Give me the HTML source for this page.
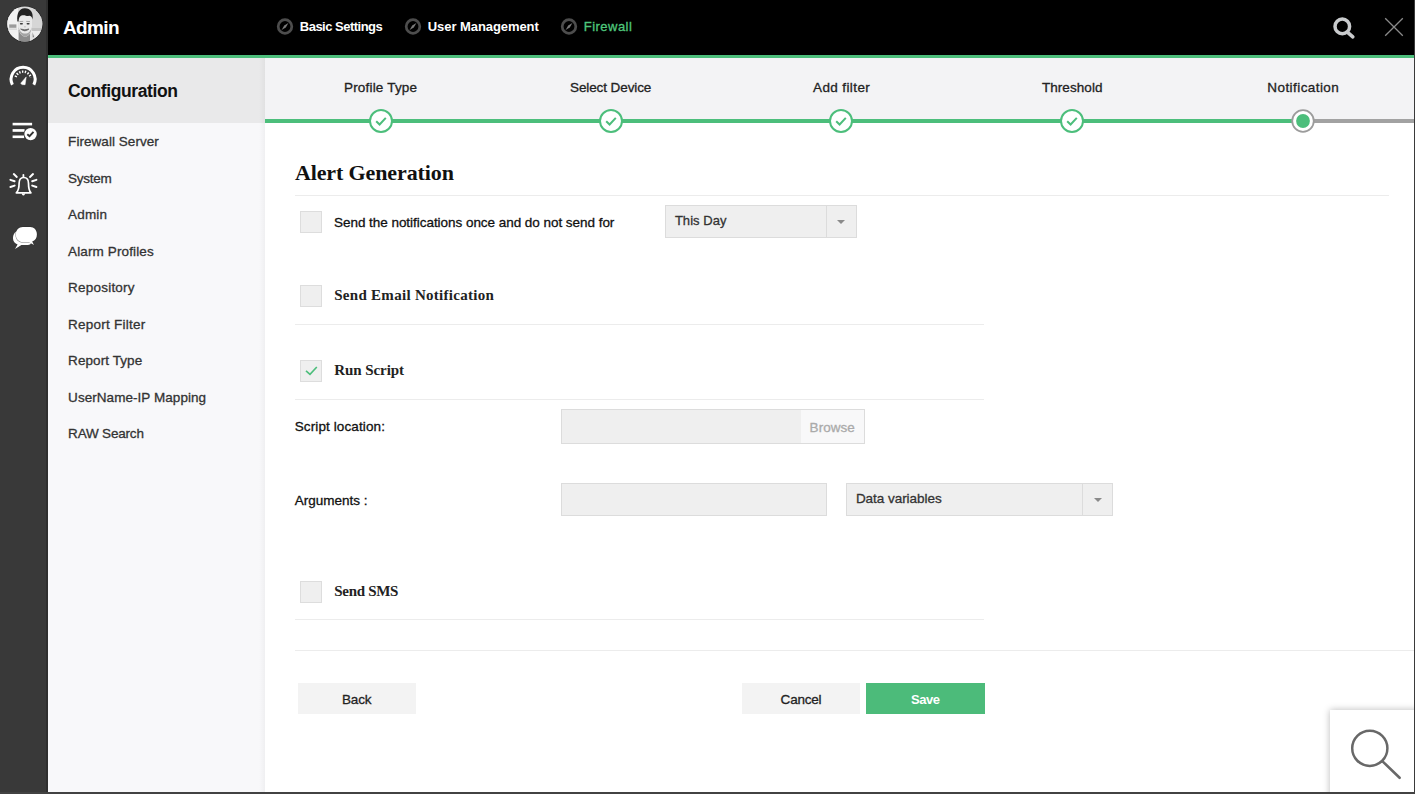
<!DOCTYPE html>
<html>
<head>
<meta charset="utf-8">
<title>Admin</title>
<style>
*{box-sizing:border-box;margin:0;padding:0}
html,body{width:1415px;height:794px;overflow:hidden;background:#fff}
body{font-family:"Liberation Sans",sans-serif;font-size:13px;color:#222;position:relative}
.abs{position:absolute}
#rail{left:0;top:0;width:48px;height:794px;background:#393939}
#topbar{left:48px;top:0;width:1367px;height:55px;background:#000}
#gline{left:48px;top:55px;width:1367px;height:3px;background:#4cbe7b}
#side{left:48px;top:58px;width:217px;height:736px;background:#f8f8fa}
#sidehead{left:48px;top:58px;width:217px;height:65px;background:#e9e9ea}
#sideshadow{left:259px;top:58px;width:6px;height:736px;background:linear-gradient(to right,rgba(0,0,0,0),rgba(0,0,0,0.035))}
#stepbg{left:265px;top:58px;width:1150px;height:61px;background:#f3f3f5}
#stepline{left:265px;top:119px;width:1037px;height:4px;background:#4cbe7b}
#stepline2{left:1302px;top:119px;width:113px;height:4px;background:#a2a2a2}
.t{position:absolute;white-space:nowrap;line-height:1}
.tk{-webkit-text-stroke:0.3px currentColor}
.sf{font-family:"Liberation Serif",serif}
.hr{position:absolute;height:1px;background:#ececec}
.cb{position:absolute;width:22px;height:22px;background:#efefef;border:1px solid #dddddd}
.inp{position:absolute;background:#efefef;border:1px solid #dcdcdc}
.btn{position:absolute;height:31px;background:#f3f3f3}
.step{position:absolute;top:109px;width:24px;height:24px}
.arrow{width:0;height:0;border-left:4px solid transparent;border-right:4px solid transparent;border-top:4px solid #8a8a8a}
#frameR{left:1413.6px;top:0;width:1.4px;height:794px;background:#3a3a3a}
#frameB{left:0;top:792px;width:1415px;height:2px;background:#424242}
</style>
</head>
<body>
<div id="rail" class="abs"></div>
<div id="topbar" class="abs"></div>
<div id="gline" class="abs"></div>
<div id="side" class="abs"></div>
<div id="sidehead" class="abs"></div>
<div id="sideshadow" class="abs"></div>
<div id="stepbg" class="abs"></div>
<div id="stepline" class="abs"></div>
<div id="stepline2" class="abs"></div>

<!-- rules -->
<div class="hr" style="left:295px;top:195px;width:1094px"></div>
<div class="hr" style="left:295px;top:324px;width:689px"></div>
<div class="hr" style="left:295px;top:399px;width:689px"></div>
<div class="hr" style="left:295px;top:619px;width:689px"></div>
<div class="hr" style="left:295px;top:650px;width:1120px"></div>

<!-- checkboxes -->
<div class="cb" style="left:300px;top:211px"></div>
<div class="cb" style="left:300px;top:285px"></div>
<div class="cb" style="left:300px;top:360px"></div>
<svg class="abs" style="left:300px;top:360px" width="22" height="22" viewBox="0 0 22 22"><path d="M6 10.8l4 3.6 6.8-7.4" fill="none" stroke="#4cbe7b" stroke-width="1.6"/></svg>
<div class="cb" style="left:300px;top:581px"></div>

<!-- buttons -->
<div class="btn" style="left:298px;top:683px;width:118px"></div>
<div class="btn" style="left:742px;top:683px;width:118px"></div>
<div class="btn" style="left:866px;top:683px;width:119px;background:#4cbb7a"></div>

<!-- selects / inputs -->
<div class="inp" style="left:665px;top:205px;width:192px;height:33px"></div>
<div class="abs" style="left:826px;top:206px;width:1px;height:31px;background:#dcdcdc"></div>
<div class="abs arrow" style="left:836.5px;top:220px"></div>

<div class="inp" style="left:561px;top:409px;width:304px;height:35px"></div>
<div class="abs" style="left:801px;top:410px;width:63px;height:33px;background:#f8f8f9"></div>

<div class="inp" style="left:561px;top:483px;width:266px;height:33px"></div>
<div class="inp" style="left:846px;top:483px;width:267px;height:33px"></div>
<div class="abs" style="left:1082px;top:484px;width:1px;height:31px;background:#dcdcdc"></div>
<div class="abs arrow" style="left:1093.8px;top:497.5px"></div>

<!-- step circles -->
<svg class="step" style="left:368.5px" viewBox="0 0 24 24"><circle cx="12" cy="12" r="11" fill="#fff" stroke="#4cbe7b" stroke-width="2"/><path d="M7.2 12.2l3.4 3.3 6.2-6.6" fill="none" stroke="#4cbe7b" stroke-width="2"/></svg>
<svg class="step" style="left:598.5px" viewBox="0 0 24 24"><circle cx="12" cy="12" r="11" fill="#fff" stroke="#4cbe7b" stroke-width="2"/><path d="M7.2 12.2l3.4 3.3 6.2-6.6" fill="none" stroke="#4cbe7b" stroke-width="2"/></svg>
<svg class="step" style="left:829.3px" viewBox="0 0 24 24"><circle cx="12" cy="12" r="11" fill="#fff" stroke="#4cbe7b" stroke-width="2"/><path d="M7.2 12.2l3.4 3.3 6.2-6.6" fill="none" stroke="#4cbe7b" stroke-width="2"/></svg>
<svg class="step" style="left:1060.3px" viewBox="0 0 24 24"><circle cx="12" cy="12" r="11" fill="#fff" stroke="#4cbe7b" stroke-width="2"/><path d="M7.2 12.2l3.4 3.3 6.2-6.6" fill="none" stroke="#4cbe7b" stroke-width="2"/></svg>
<svg class="step" style="left:1290.9px" viewBox="0 0 24 24"><circle cx="12" cy="12" r="10.8" fill="#fff" stroke="#9c9c9c" stroke-width="1.8"/><circle cx="12" cy="12" r="6.9" fill="#4cbe7b"/></svg>

<div class="t" style="left:63.0px;top:17.9px;font-size:19px;color:#fff;letter-spacing:-0.63px;font-weight:bold">Admin</div>
<div class="t" style="left:299.8px;top:20.2px;font-size:13px;color:#fff;letter-spacing:-0.51px;font-weight:bold">Basic Settings</div>
<div class="t" style="left:427.8px;top:20.2px;font-size:13px;color:#fff;letter-spacing:-0.07px;font-weight:bold">User Management</div>
<div class="t tk" style="left:583.8px;top:20.2px;font-size:13px;color:#4ec77c;letter-spacing:0.47px">Firewall</div>
<div class="t" style="left:68.0px;top:83.2px;font-size:17.5px;color:#111;letter-spacing:-0.39px;font-weight:bold">Configuration</div>
<div class="t tk" style="left:68.1px;top:135.1px;font-size:13.5px;color:#333;letter-spacing:0.05px">Firewall Server</div>
<div class="t tk" style="left:68.1px;top:171.6px;font-size:13.5px;color:#333;letter-spacing:-0.26px">System</div>
<div class="t tk" style="left:68.1px;top:208.1px;font-size:13.5px;color:#333;letter-spacing:0.16px">Admin</div>
<div class="t tk" style="left:68.1px;top:244.6px;font-size:13.5px;color:#333;letter-spacing:0.12px">Alarm Profiles</div>
<div class="t tk" style="left:68.1px;top:281.1px;font-size:13.5px;color:#333;letter-spacing:0.21px">Repository</div>
<div class="t tk" style="left:68.1px;top:317.6px;font-size:13.5px;color:#333;letter-spacing:0.23px">Report Filter</div>
<div class="t tk" style="left:68.1px;top:354.1px;font-size:13.5px;color:#333;letter-spacing:0.08px">Report Type</div>
<div class="t tk" style="left:68.1px;top:390.6px;font-size:13.5px;color:#333;letter-spacing:0.05px">UserName-IP Mapping</div>
<div class="t tk" style="left:68.1px;top:427.1px;font-size:13.5px;color:#333;letter-spacing:-0.19px">RAW Search</div>
<div class="t tk" style="left:344.0px;top:81.0px;font-size:13.5px;color:#222;letter-spacing:0.18px">Profile Type</div>
<div class="t tk" style="left:570.0px;top:81.0px;font-size:13.5px;color:#222;letter-spacing:-0.10px">Select Device</div>
<div class="t tk" style="left:813.0px;top:81.0px;font-size:13.5px;color:#222;letter-spacing:0.39px">Add filter</div>
<div class="t tk" style="left:1041.9px;top:81.0px;font-size:13.5px;color:#222;letter-spacing:0.07px">Threshold</div>
<div class="t tk" style="left:1267.3px;top:81.0px;font-size:13.5px;color:#222;letter-spacing:0.43px">Notification</div>
<div class="t sf" style="left:294.9px;top:161.6px;font-size:22px;color:#111;letter-spacing:-0.11px;font-weight:bold">Alert Generation</div>
<div class="t tk" style="left:334.0px;top:215.9px;font-size:13.5px;color:#111;letter-spacing:-0.04px">Send the notifications once and do not send for</div>
<div class="t tk" style="left:674.9px;top:214.0px;font-size:13px;color:#333;letter-spacing:0.04px">This Day</div>
<div class="t sf" style="left:334.2px;top:288.4px;font-size:15px;color:#222;letter-spacing:0.29px;font-weight:bold">Send Email Notification</div>
<div class="t sf" style="left:334.3px;top:362.7px;font-size:15px;color:#222;letter-spacing:-0.08px;font-weight:bold">Run Script</div>
<div class="t tk" style="left:294.7px;top:420.0px;font-size:13.5px;color:#111;letter-spacing:0.11px">Script location:</div>
<div class="t tk" style="left:809.6px;top:420.6px;font-size:13.5px;color:#aaaaaa;letter-spacing:0.04px">Browse</div>
<div class="t tk" style="left:294.7px;top:493.8px;font-size:13.5px;color:#111;letter-spacing:0.00px">Arguments :</div>
<div class="t tk" style="left:855.9px;top:491.9px;font-size:13.5px;color:#333;letter-spacing:-0.04px">Data variables</div>
<div class="t sf" style="left:334.3px;top:584.0px;font-size:15px;color:#222;letter-spacing:-0.31px;font-weight:bold">Send SMS</div>
<div class="t tk" style="left:342.0px;top:692.8px;font-size:13.5px;color:#222;letter-spacing:-0.14px">Back</div>
<div class="t tk" style="left:780.6px;top:692.8px;font-size:13.5px;color:#222;letter-spacing:-0.21px">Cancel</div>
<div class="t" style="left:910.9px;top:693.2px;font-size:13px;color:#fff;letter-spacing:-0.42px;font-weight:bold">Save</div>

<!-- rail right edge -->
<div class="abs" style="left:46.4px;top:0;width:1.6px;height:794px;background:rgba(0,0,0,0.16)"></div>

<!-- avatar -->
<svg class="abs" style="left:5px;top:4px" width="40" height="40" viewBox="0 0 40 40">
 <defs>
  <clipPath id="avc"><circle cx="19.8" cy="20" r="17.5"/></clipPath>
  <filter id="avb" x="-20%" y="-20%" width="140%" height="140%"><feGaussianBlur stdDeviation="0.65"/></filter>
 </defs>
 <circle cx="19.8" cy="20" r="18.3" fill="#2b2b2b"/>
 <g clip-path="url(#avc)">
  <rect x="0" y="0" width="40" height="40" fill="#d9d9d9"/>
  <g filter="url(#avb)">
   <rect x="1" y="1" width="12" height="38" fill="#f1f1f1"/>
   <rect x="27" y="2" width="12" height="22" fill="#d6d6d6"/>
   <rect x="27" y="24" width="12" height="3" fill="#c2c2c2"/>
   <rect x="26" y="27" width="13" height="12" fill="#ececec"/>
   <rect x="4.2" y="20.4" width="7.2" height="3.4" fill="#9b9b9b"/>
   <rect x="2" y="24.5" width="10" height="1.2" fill="#d0d0d0"/>
   <!-- shirt -->
   <path d="M4 40 L8 30 L14 27 L14 40 Z" fill="#f4f4f4"/>
   <path d="M24 29 L30 31 L34 40 L24 40 Z" fill="#e2e2e2"/>
   <path d="M27.5 28 L29 33 L27.8 33.5 Z" fill="#777"/>
   <!-- neck / jaw -->
   <path d="M13.6 26 L13.6 40 L25 40 L25 27 Z" fill="#8c8c8c"/>
   <!-- face -->
   <path d="M13.2 14 C13.2 10.5 16 9.5 20 9.5 C24.5 9.5 27 10.5 27 14 L27 22 C27 28 24 32.6 20.2 32.6 C16.4 32.6 13.2 28 13.2 22 Z" fill="#e9e9e9"/>
   <path d="M13.4 23 C13.8 28 16.6 32.4 20.2 32.4 C23.8 32.4 26.4 28 26.8 23 C25.6 27.6 23.4 29.6 20.2 29.6 C17 29.6 14.6 27.6 13.4 23 Z" fill="#a4a4a4"/>
   <!-- hair -->
   <path d="M12.4 17.4 C11.4 9 14.4 4.6 19.4 4.2 C25 3.8 28.6 8 27.6 15.6 C27 12.8 25.6 11.6 23.6 11.9 C21.6 12.2 20.6 11.2 18.6 11.2 C15.4 11.2 13.8 13 13.6 17.6 Z" fill="#242424"/>
   <!-- eyes -->
   <rect x="14.9" y="18.9" width="3" height="1.5" rx="0.7" fill="#3a3a3a"/>
   <rect x="21.6" y="18.9" width="3" height="1.5" rx="0.7" fill="#3a3a3a"/>
   <path d="M14.4 17.6 L18.2 17.4 M21.2 17.4 L25 17.6" stroke="#8a8a8a" stroke-width="0.7"/>
   <!-- nose + mouth -->
   <path d="M19.2 22.8 L20.8 22.8" stroke="#b5b5b5" stroke-width="0.9"/>
   <path d="M15.6 25 Q19.8 28.6 24 25 Q19.8 26.6 15.6 25 Z" fill="#5a5a5a" stroke="#5a5a5a" stroke-width="0.7"/>
  </g>
 </g>
</svg>

<!-- gauge -->
<svg class="abs" style="left:0;top:55px" width="48" height="50" viewBox="0 55 48 50">
 <path d="M12.4 84.75 A12 12 0 1 1 33.8 84.75" fill="none" stroke="#fff" stroke-width="3"/>
 <path d="M15.6 77.0 A8 8 0 0 1 30.9 77.6" fill="none" stroke="#fff" stroke-width="2.4" stroke-dasharray="1.35 1.5"/>
 <path d="M26.2 76.9 L20.7 83.3 Q21.6 85.2 25.1 84.7 Z" fill="#fff" stroke="#fff" stroke-width="0.5" stroke-linejoin="round"/>
</svg>

<!-- list check -->
<svg class="abs" style="left:0;top:108px" width="48" height="50" viewBox="0 108 48 50">
 <rect x="12.6" y="122.8" width="19.5" height="2.6" fill="#fff"/>
 <rect x="12.6" y="129.1" width="12" height="2.7" fill="#fff"/>
 <rect x="12.6" y="135.5" width="11.6" height="2.6" fill="#fff"/>
 <circle cx="30.6" cy="134.1" r="6.9" fill="#393939"/>
 <circle cx="30.6" cy="134.1" r="6.2" fill="#fff"/>
 <path d="M27.3 134.2 L29.5 136.2 L33.5 131.8" fill="none" stroke="#333" stroke-width="1.9"/>
</svg>

<!-- bell -->
<svg class="abs" style="left:0;top:160px" width="48" height="50" viewBox="0 160 48 50">
 <g fill="none" stroke="#fff" stroke-linecap="round">
  <path d="M23.4 174.8 V177" stroke-width="1.8"/>
  <path d="M16.3 192.8 C18.6 190.6 19.1 188.4 19.1 183.2 C19.1 179.4 20.9 177.5 23.7 177.5 C26.5 177.5 28.5 179.4 28.5 183.2 C28.5 188.4 28.9 190.6 30.9 192.8 Z" stroke-width="1.7" stroke-linejoin="round"/>
  <path d="M22.6 194 Q23.4 195.6 24.2 194" stroke-width="1.6"/>
  <g stroke-width="2">
   <path d="M13.8 174.1 L16.8 176.9"/><path d="M10.4 179.9 L14.6 181.3"/><path d="M10.4 187 L14.6 185.6"/>
   <path d="M33 174.1 L30 176.9"/><path d="M36.4 179.9 L32.2 181.3"/><path d="M36.4 187 L32.2 185.6"/>
  </g>
 </g>
</svg>

<!-- chat -->
<svg class="abs" style="left:0;top:212px" width="48" height="50" viewBox="0 212 48 50">
 <path d="M20 230.6 C15 230.6 13 234.5 13 238.5 C13 241.5 15 243.6 17.6 244.4 L15 249 L21.4 245 L28 245 C31 245 32 242 32 240 Z" fill="#fff"/>
 <path d="M22.6 226.4 H30.4 C34.6 226.4 37.4 229.8 37.4 234.4 C37.4 238.2 35.6 240.6 32.6 241.8 L34.4 245.4 L29.6 242.8 H22.6 C18.4 242.8 15.4 239.4 15.4 234.6 C15.4 229.8 18.4 226.4 22.6 226.4 Z" fill="#222" opacity="0.55"/>
 <path d="M22.8 227.1 H30.2 C34.2 227.1 36.9 230.2 36.9 234.5 C36.9 238 35.2 240.4 32.2 241.5 L34 245 L29 242.2 H22.8 C18.8 242.2 15.8 239 15.8 234.6 C15.8 230.2 18.8 227.1 22.8 227.1 Z" fill="#fff"/>
</svg>

<!-- compass icons -->
<svg class="abs" style="left:275px;top:16px" width="20" height="21" viewBox="0 0 20 21"><circle cx="10" cy="10.5" r="6.8" fill="none" stroke="#4d4d4d" stroke-width="2.7"/><path d="M6.6 13.9 L9.2 9.6 L13.4 7.1 L10.8 11.4 Z" fill="#7a7a7a"/></svg>
<svg class="abs" style="left:402.7px;top:16px" width="20" height="21" viewBox="0 0 20 21"><circle cx="10" cy="10.5" r="6.8" fill="none" stroke="#4d4d4d" stroke-width="2.7"/><path d="M6.6 13.9 L9.2 9.6 L13.4 7.1 L10.8 11.4 Z" fill="#7a7a7a"/></svg>
<svg class="abs" style="left:558.7px;top:16px" width="20" height="21" viewBox="0 0 20 21"><circle cx="10" cy="10.5" r="6.8" fill="none" stroke="#4d4d4d" stroke-width="2.7"/><path d="M6.6 13.9 L9.2 9.6 L13.4 7.1 L10.8 11.4 Z" fill="#7a7a7a"/></svg>

<!-- search + close -->
<svg class="abs" style="left:1325px;top:10px" width="85" height="35" viewBox="1325 10 85 35">
 <circle cx="1342.3" cy="26.4" r="7.3" fill="none" stroke="#c9cbcd" stroke-width="3.5"/>
 <path d="M1347.9 32.6 L1352.8 36.8" stroke="#c9cbcd" stroke-width="3.6" stroke-linecap="round"/>
 <path d="M1385.2 18.2 L1402.8 35.8 M1402.8 18.2 L1385.2 35.8" stroke="#8a8a8a" stroke-width="1.3"/>
</svg>

<!-- floating magnifier -->
<div class="abs" style="left:1330px;top:710px;width:90px;height:90px;background:#fff;box-shadow:0 0 7px rgba(0,0,0,0.28)"></div>
<svg class="abs" style="left:1340px;top:720px" width="70" height="70" viewBox="1340 720 70 70">
 <circle cx="1369.8" cy="748.3" r="17.6" fill="none" stroke="#686868" stroke-width="2.5"/>
 <path d="M1382.8 761.6 L1399.6 777.8" stroke="#686868" stroke-width="2.6" stroke-linecap="round"/>
</svg>


<div id="frameR" class="abs"></div>
<div id="frameB" class="abs"></div>
</body>
</html>
